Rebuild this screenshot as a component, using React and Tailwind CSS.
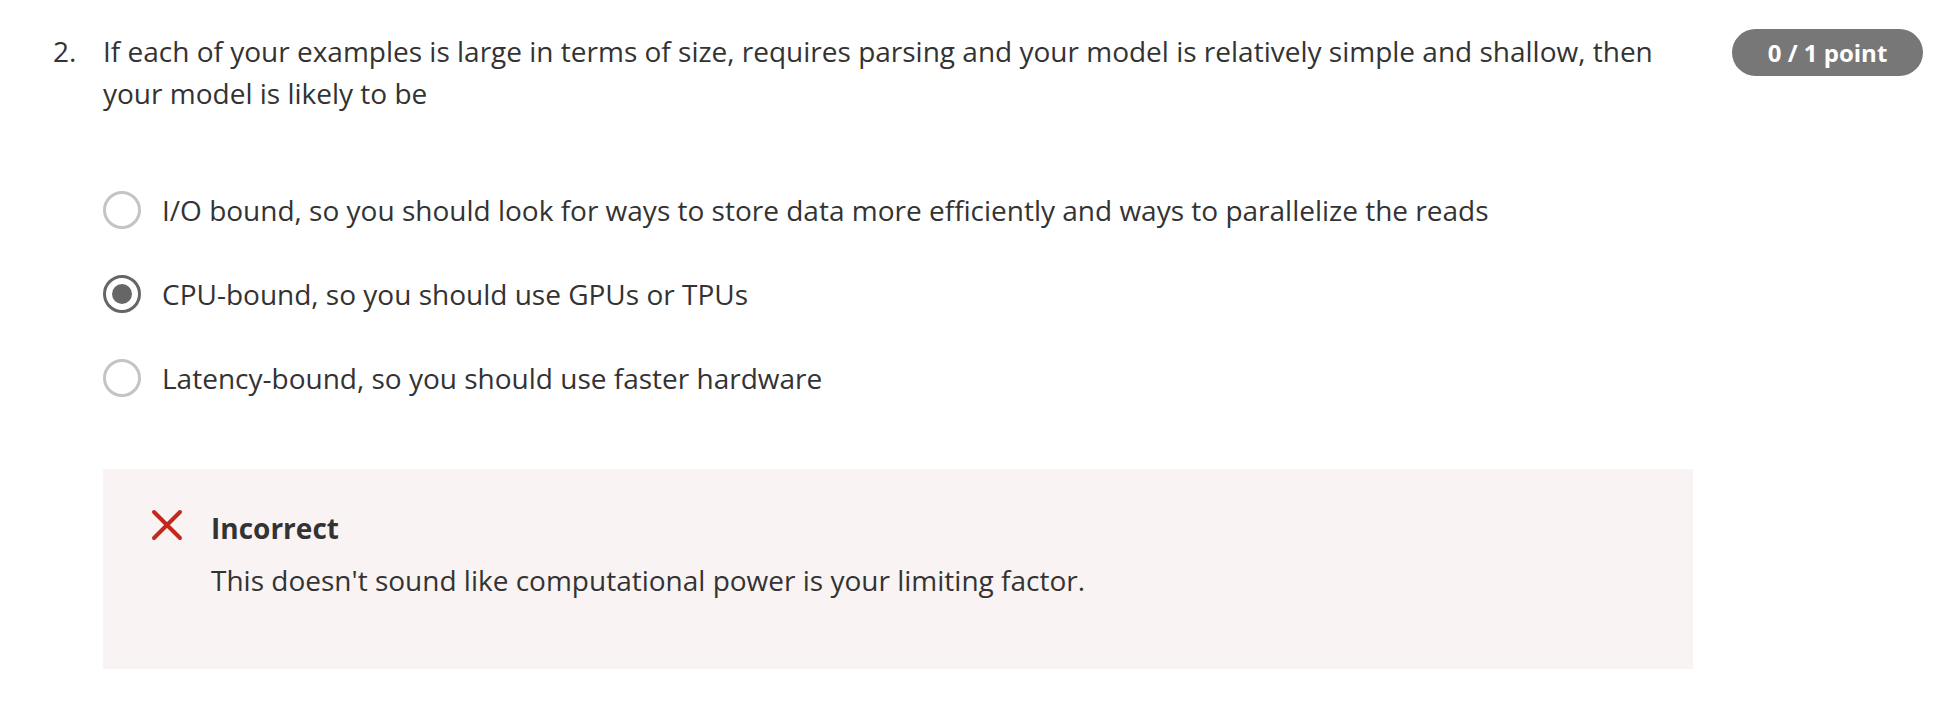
const options = [
  { label: 'I/O bound, so you should look for ways to store data more efficiently and ways to parallelize the reads', checked: false },
  { label: 'CPU-bound, so you should use GPUs or TPUs', checked: true },
  { label: 'Latency-bound, so you should use faster hardware', checked: false },
];

function Radio({ checked }) {
  if (checked) {
    return (
      <span className="w-[38px] h-[38px] shrink-0 rounded-full border-[3px] border-[#666] flex items-center justify-center">
        <span className="w-[20px] h-[20px] rounded-full bg-[#666]" />
      </span>
    );
  }
  return <span className="w-[38px] h-[38px] shrink-0 rounded-full border-[3px] border-[#c4c4c4]" />;
}

export default function App() {
  return (
    <div className="w-[1946px] h-[718px] bg-white text-[#333] font-['Open_Sans',sans-serif] flex pt-[30px]">
      <div className="w-[103px] shrink-0 pl-[53px] text-[28px] leading-[42px]">2.</div>

      <div className="w-[1590px] shrink-0">
        <p className="text-[28px] leading-[42px] pr-[30px]">
          If each of your examples is large in terms of size, requires parsing and your model is relatively simple and shallow, then your model is likely to be
        </p>

        <div className="mt-[77px] flex flex-col gap-[46px]">
          {options.map(o => (
            <label key={o.label} className="flex items-center gap-[21px] h-[38px] text-[28px]">
              <Radio checked={o.checked} />
              <span>{o.label}</span>
            </label>
          ))}
        </div>

        <div className="mt-[72px] h-[200px] bg-[#f9f3f3] pl-[48px] pt-[38px] flex gap-[28px]">
          <svg width="32" height="32" viewBox="0 0 32 32" className="shrink-0 mt-[2px]">
            <path d="M3 3 L29 29 M29 3 L3 29" stroke="#c4281c" strokeWidth="4" strokeLinecap="round" />
          </svg>
          <div className="text-[28px] leading-[52px] -mt-[5px]">
            <p className="font-bold">Incorrect</p>
            <p>This doesn't sound like computational power is your limiting factor.</p>
          </div>
        </div>
      </div>

      <div className="flex-1 flex justify-end pr-[23px]">
        <span className="h-[47px] w-[191px] rounded-full bg-[#777] text-white font-bold text-[24px] flex items-center justify-center -mt-[1px]">
          0 / 1 point
        </span>
      </div>
    </div>
  );
}
